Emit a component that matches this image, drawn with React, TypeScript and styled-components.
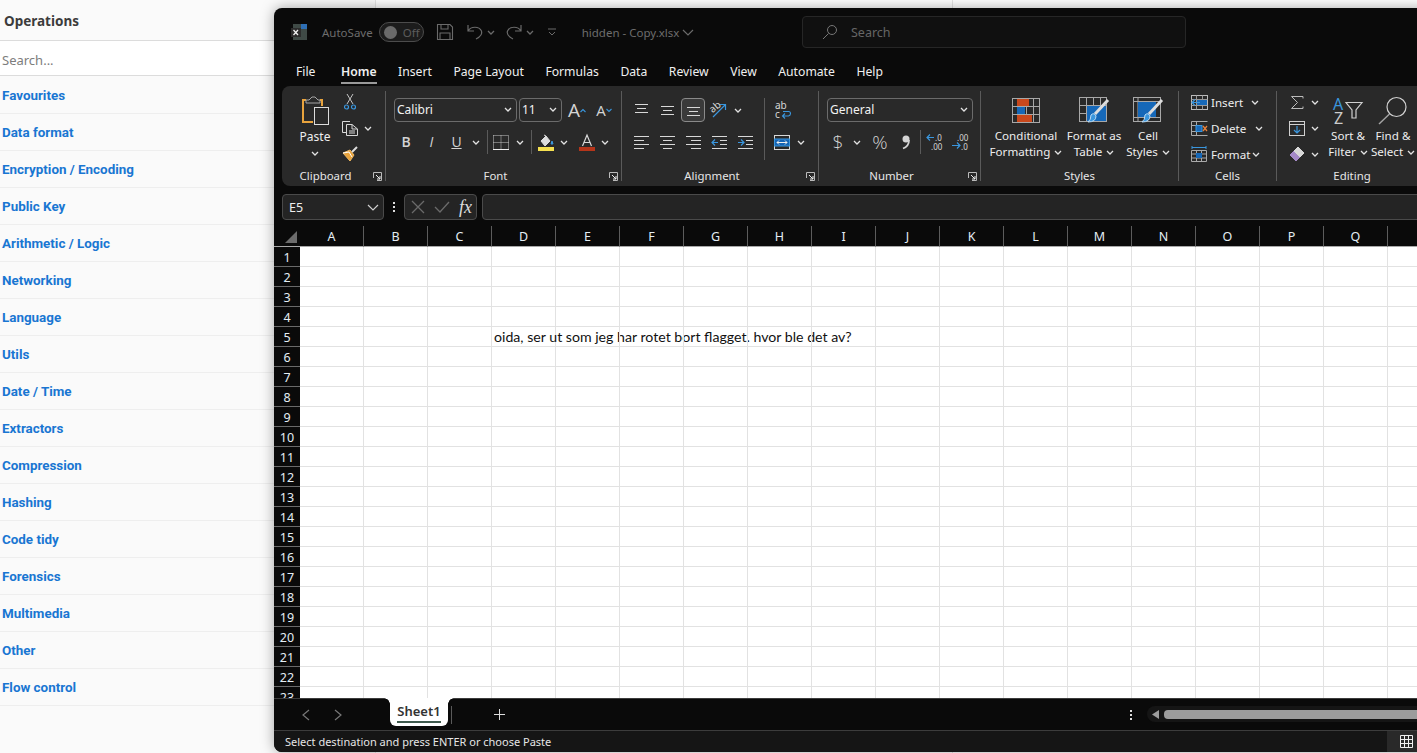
import React from "react";
import styled, { createGlobalStyle } from "styled-components";

const UI = `"Noto Sans", "Open Sans", sans-serif`;

const Global = createGlobalStyle`
  html, body { margin: 0; padding: 0; height: 100%; overflow: hidden; background: #fff; }
  #root { height: 753px; width: 1417px; overflow: hidden; position: relative; }
`;

const Page = styled.div`
  display: grid;
  grid-template-columns: 376px 577px 1fr;
  height: 753px;
  font-family: ${UI};
`;
const Sidebar = styled.aside`
  border-right: 1px solid #e4e4e4;
  background: #fafafa;
`;
const Pane = styled.div`
  border-right: 1px solid #e4e4e4;
  background: #fff;
`;
const SideHead = styled.div`
  height: 39px;
  padding-top: 1px;
  border-bottom: 1px solid #dcdcdc;
  display: flex;
  align-items: center;
  padding-left: 4px;
  font-size: 13.5px;
  font-weight: 700;
  color: #3c3c3c;
`;
const SideSearch = styled.div`
  height: 30px;
  padding-top: 4px;
  margin-bottom: 1px;
  background: #fff;
  border-bottom: 1px solid #dcdcdc;
  display: flex;
  align-items: center;
  padding-left: 2px;
  font-size: 13px;
  color: #7d7d7d;
`;
const SideRow = styled.div`
  height: 36px;
  border-bottom: 1px solid #eeeeee;
  display: flex;
  align-items: center;
  padding-left: 2px;
  font-family: Roboto, sans-serif;
  font-size: 13.4px;
  font-weight: 700;
  color: #1976d2;
`;

const Window = styled.section`
  position: absolute;
  left: 274px;
  top: 8px;
  width: 1160px;
  height: 744px;
  background: #0a0a0a;
  border-radius: 8px;
  box-shadow: 0 0 14px rgba(0, 0, 0, 0.35);
  display: flex;
  flex-direction: column;
  overflow: hidden;
  font-family: ${UI};
  color: #e6e6e6;
`;

const TitleBar = styled.div`
  height: 48px;
  flex: none;
  display: flex;
  align-items: center;
  padding-left: 17px;
  color: #6d6d6d;
  font-size: 11.5px;
`;
const TitleText = styled.span<{ $ml: number }>`
  margin-left: ${p => p.$ml}px;
  white-space: nowrap;
`;
const Toggle = styled.div`
  margin-left: 6px;
  width: 45px;
  height: 20px;
  box-sizing: border-box;
  border: 1px solid #4c4c4c;
  border-radius: 10px;
  background: #1c1c1c;
  display: flex;
  align-items: center;
  padding-left: 4px;
  gap: 6px;
  font-size: 11.5px;
  color: #5c5c5c;
`;
const Knob = styled.i`
  width: 13px;
  height: 13px;
  border-radius: 50%;
  background: #6a6a6a;
`;
const Slot = styled.span<{ $w: number; $ml?: number; $h?: number }>`
  flex: none;
  display: inline-flex;
  align-items: center;
  justify-content: center;
  width: ${p => p.$w}px;
  height: ${p => (p.$h ? `${p.$h}px` : "100%")};
  margin-left: ${p => p.$ml ?? 0}px;
`;
const TopSearch = styled.div`
  position: absolute;
  left: 528px;
  top: 8px;
  width: 384px;
  height: 32px;
  box-sizing: border-box;
  border: 1px solid #262626;
  border-radius: 4px;
  background: #101010;
  display: flex;
  align-items: center;
  padding-left: 19px;
  gap: 13px;
  font-size: 12.5px;
  color: #666;
`;

const MenuBar = styled.nav`
  height: 30px;
  flex: none;
  display: flex;
  align-items: center;
  gap: 21.5px;
  padding-left: 22px;
  font-size: 12.2px;
  color: #f0f0f0;
`;
const MenuItem = styled.span<{ $active?: boolean; $mr?: number }>`
  position: relative;
  white-space: nowrap;
  margin-right: ${p => p.$mr ?? 0}px;
  font-weight: ${p => (p.$active ? 600 : 400)};
  ${p =>
    p.$active &&
    `&::after { content: ""; position: absolute; left: 0; right: 0; bottom: -4px; height: 2px; background: #9a9a9a; }`}
`;

const Ribbon = styled.div`
  height: 100px;
  flex: none;
  margin-left: 8px;
  padding: 5px 0;
  box-sizing: border-box;
  background: #292929;
  border-radius: 8px 0 0 8px;
  display: flex;
`;
const Group = styled.div<{ $w: number; $last?: boolean }>`
  width: ${p => p.$w}px;
  flex: none;
  box-sizing: border-box;
  display: flex;
  flex-direction: column;
  border-right: ${p => (p.$last ? "none" : "1px solid #5a5a5a")};
`;
const GroupBody = styled.div<{ $pl?: number; $pt?: number }>`
  flex: 1;
  display: flex;
  padding-left: ${p => p.$pl ?? 0}px;
  padding-top: ${p => p.$pt ?? 0}px;
  min-height: 0;
`;
const GroupFoot = styled.div<{ $launcher?: boolean }>`
  height: 16px;
  flex: none;
  padding-top: 6px;
  box-sizing: border-box;
  display: grid;
  grid-template-columns: ${p => (p.$launcher ? "1fr 16px" : "1fr")};
  align-items: center;
  justify-items: center;
  font-size: 11.4px;
  line-height: 10px;
  color: #e6e6e6;
`;
const Rows = styled.div<{ $w?: number }>`
  display: flex;
  flex-direction: column;
  gap: 8px;
  width: ${p => (p.$w ? `${p.$w}px` : "auto")};
  flex: none;
`;
const SmallRows = styled.div<{ $ml?: number }>`
  display: flex;
  flex-direction: column;
  gap: 4px;
  margin-left: ${p => p.$ml ?? 0}px;
`;
const Line = styled.div<{ $h?: number }>`
  display: flex;
  align-items: center;
  height: ${p => p.$h ?? 24}px;
`;
const Select = styled.div<{ $w: number; $ml?: number }>`
  width: ${p => p.$w}px;
  height: 24px;
  margin-left: ${p => p.$ml ?? 0}px;
  box-sizing: border-box;
  flex: none;
  border: 1px solid #6b6b6b;
  border-radius: 4px;
  display: flex;
  align-items: center;
  justify-content: space-between;
  padding: 0 4px 1px 2px;
  font-size: 12px;
  color: #f2f2f2;
`;
const VSep = styled.i<{ $h: number; $ml: number }>`
  width: 1px;
  height: ${p => p.$h}px;
  margin-left: ${p => p.$ml}px;
  background: #5a5a5a;
  flex: none;
`;
const Glyph = styled.span<{ $size: number; $weight?: number; $italic?: boolean; $under?: boolean }>`
  font-family: "Open Sans", sans-serif;
  font-size: ${p => p.$size}px;
  font-weight: ${p => p.$weight ?? 400};
  font-style: ${p => (p.$italic ? "italic" : "normal")};
  text-decoration: ${p => (p.$under ? "underline" : "none")};
  color: #d4d4d4;
  line-height: 1;
`;
const Big = styled.div<{ $w: number; $ml?: number }>`
  width: ${p => p.$w}px;
  margin-left: ${p => p.$ml ?? 0}px;
  flex: none;
  display: flex;
  flex-direction: column;
  align-items: center;
  padding-top: 6px;
  font-size: 11.6px;
  line-height: 16px;
  color: #eee;
  white-space: nowrap;
`;
const BigIcon = styled.div`
  height: 26px;
  margin-bottom: 5px;
  display: flex;
  align-items: center;
`;
const ChevInline = styled.span`
  display: inline-block;
  vertical-align: middle;
  margin-left: 1px;
`;
const PasteBtn = styled.div`
  width: 50px;
  margin-left: 8px;
  flex: none;
  display: flex;
  flex-direction: column;
  align-items: center;
  padding-top: 4px;
  font-size: 12px;
  line-height: 16px;
  color: #eee;
`;
const PasteLabel = styled.span`
  margin-top: 4px;
  margin-bottom: 6px;
`;
const CellLabel = styled.span<{ $w: number }>`
  width: ${p => p.$w}px;
  flex: none;
  margin-left: 3px;
  font-size: 11.6px;
  color: #eee;
`;
const Pressed = styled.span`
  width: 24px;
  height: 24px;
  box-sizing: border-box;
  border: 1px solid #8a8a8a;
  border-radius: 4px;
  background: #3a3a3a;
  display: inline-flex;
  align-items: center;
  justify-content: center;
`;

const FormulaBar = styled.div`
  height: 26px;
  flex: none;
  margin-top: 8px;
  padding-left: 8px;
  display: flex;
  align-items: stretch;
`;
const NameBox = styled.div`
  width: 102px;
  box-sizing: border-box;
  border: 1px solid #4a4a4a;
  border-radius: 4px;
  background: #242424;
  display: flex;
  align-items: center;
  justify-content: space-between;
  padding: 0 4px 0 6px;
  font-size: 12.5px;
  color: #eee;
`;
const FxBox = styled.div`
  width: 73px;
  box-sizing: border-box;
  border: 1px solid #4a4a4a;
  border-radius: 4px;
  background: #242424;
  display: flex;
  align-items: center;
  justify-content: space-between;
  padding: 0 4px 0 6px;
`;
const FxText = styled.span`
  font-family: "Liberation Serif", serif;
  font-style: italic;
  font-size: 18px;
  color: #ddd;
`;
const FormulaInput = styled.div`
  flex: 1;
  margin-left: 5px;
  box-sizing: border-box;
  border: 1px solid #4a4a4a;
  border-radius: 4px;
  background: #242424;
`;
const Dots = styled.div<{ $w?: number }>`
  width: ${p => p.$w ?? 20}px;
  display: flex;
  flex-direction: column;
  align-items: center;
  justify-content: center;
  gap: 2px;
  & i { width: 2px; height: 2px; background: #ddd; }
`;

const Sheet = styled.div`
  margin-top: 6px;
  height: 472px;
  flex: none;
  overflow: hidden;
  display: grid;
  grid-template-columns: 26px repeat(18, 64px);
  grid-template-rows: 21px;
  grid-auto-rows: 20px;
  background: #fff;
`;
const Corner = styled.div`
  background: #0a0a0a;
  border-bottom: 1px solid #a8a8a8;
  display: flex;
  align-items: flex-end;
  justify-content: flex-end;
  padding: 0 3px 3px 0;
  box-sizing: border-box;
`;
const ColHead = styled.div`
  background: #0a0a0a;
  border-right: 1px solid #5c5c5c;
  border-bottom: 1px solid #a8a8a8;
  box-sizing: border-box;
  padding-top: 1px;
  display: flex;
  align-items: center;
  justify-content: center;
  font-size: 12.5px;
  color: #e4eef5;
`;
const RowHead = styled.div`
  background: #0a0a0a;
  border-bottom: 1px solid #6a6a6a;
  box-sizing: border-box;
  padding-top: 1px;
  display: flex;
  align-items: center;
  justify-content: center;
  font-size: 12.5px;
  color: #e4eef5;
`;
const Cell = styled.div`
  border-right: 1px solid #e2e2e2;
  border-bottom: 1px solid #e2e2e2;
  box-sizing: border-box;
  white-space: nowrap;
  padding-left: 2px;
  font-family: Lato, "Open Sans", sans-serif;
  font-size: 14.15px;
  line-height: 19px;
  color: #111;
`;

const TabBar = styled.div`
  height: 32px;
  flex: none;
  box-sizing: border-box;
  background: #0a0a0a;
  border-top: 1px solid #3c3c3c;
  display: flex;
  align-items: center;
`;
const Tab = styled.div`
  position: relative;
  align-self: flex-start;
  margin-top: -1px;
  margin-left: 47px;
  width: 58px;
  height: 28px;
  flex: none;
  box-sizing: border-box;
  background: #fff;
  border-radius: 0 0 6px 6px;
  display: flex;
  justify-content: center;
  padding-top: 4px;
  font-size: 13px;
  font-weight: 600;
  color: #333;
  &::before, &::after {
    content: "";
    position: absolute;
    top: 0;
    width: 6px;
    height: 6px;
  }
  &::before {
    left: -6px;
    background: radial-gradient(circle at 0 100%, transparent 5.5px, #fff 6px);
  }
  &::after {
    right: -6px;
    background: radial-gradient(circle at 100% 100%, transparent 5.5px, #fff 6px);
  }
`;
const TabText = styled.span`
  height: 19px;
  line-height: 18px;
  border-bottom: 2px solid #3f5a4e;
`;
const ScrollTrack = styled.div`
  margin-left: 14px;
  margin-top: -1px;
  flex: 1;
  height: 16px;
  background: #151515;
  border-radius: 8px 0 0 8px;
  display: flex;
  align-items: center;
  padding-left: 5px;
  gap: 5px;
`;
const ScrollThumb = styled.div`
  flex: 1;
  height: 9px;
  background: #9c9c9c;
  border-radius: 4px 0 0 4px;
`;
const StatusBar = styled.footer`
  height: 22px;
  flex: none;
  box-sizing: border-box;
  background: #151515;
  border-top: 1px solid #3c3c3c;
  display: flex;
  align-items: center;
  justify-content: space-between;
  padding-left: 11px;
  font-size: 11px;
  color: #e6e6e6;
`;
const ViewBtn = styled.div`
  width: 47px;
  height: 100%;
  box-sizing: border-box;
  background: #292929;
  padding-left: 13px;
  display: flex;
  align-items: center;
`;

const S = "#d8d8d8";
const B = "#3a96dd";
const O = "#c8481c";

const Icon: React.FC<{ w: number; h: number; vb?: string; children: React.ReactNode; c?: string }> = ({ w, h, vb, children, c }) => (
  <svg width={w} height={h} viewBox={vb ?? `0 0 ${w} ${h}`} fill="none" stroke={c ?? S} strokeWidth={1} style={{ display: "block", flex: "none", overflow: "visible" }}>
    {children}
  </svg>
);

const Chev = ({ c }: { c?: string }) => (
  <Icon w={8} h={5} c={c ?? "#e2e2e2"}>
    <path d="M1 1l3 3 3-3" strokeWidth={1.3} />
  </Icon>
);

const Chev2 = () => (
  <ChevInline>
    <Chev />
  </ChevInline>
);

const ChevLg = ({ c }: { c?: string }) => (
  <Icon w={12} h={7} c={c ?? "#cfcfcf"}>
    <path d="M1 1l5 5 5-5" strokeWidth={1.2} />
  </Icon>
);

const Launcher = () => (
  <Icon w={9} h={9}>
    <path d="M.5 6V.5H8.5V8.5H4" stroke="#bbb" />
    <path d="M3 3l4 4M7 4v3H4" stroke="#eee" />
  </Icon>
);

const ExcelLogo = () => (
  <Icon w={16} h={16}>
    <rect x={2} y={0} width={14} height={16} fill="#3f4a46" stroke="none" />
    <rect x={10} y={0} width={6} height={5} fill="#2e6fb5" stroke="none" />
    <rect x={0} y={4} width={10} height={9} fill="#2c2c2c" stroke="none" />
    <path d="M2.500 6l4.500 5M7 6l-4.500 5" stroke="#f0f0f0" strokeWidth={1.3} />
  </Icon>
);

const SaveIcon = () => (
  <Icon w={16} h={16} c="#6a6a6a">
    <path d="M.5.5H13L15.5 3V15.5H.5Z M4 .5V5H11V.5 M3 15.5V9H13V15.5" strokeWidth={1.1} />
  </Icon>
);
const UndoIcon = ({ flip }: { flip?: boolean }) => (
  <Icon w={16} h={16} c="#6a6a6a">
    <g transform={flip ? "matrix(-1 0 0 1 16 0)" : undefined}>
      <path d="M1 1V7H7M1 7C4 2 12 2 14.500 7C15.500 10 13 13 9 15" strokeWidth={1.2} />
    </g>
  </Icon>
);
const CustomizeIcon = () => (
  <Icon w={8} h={9} c="#6a6a6a">
    <path d="M0 1H8M1 4l3 3 3-3" />
  </Icon>
);
const SearchGlass = () => (
  <Icon w={16} h={16} c="#777">
    <circle cx={10} cy={6} r={4.500} />
    <path d="M6.500 9.500L1 15" />
  </Icon>
);
const PasteIcon = () => (
  <Icon w={28} h={30}>
    <path d="M5 5H2V27H12M19 5H21V11" stroke="#e8a33d" strokeWidth={2} />
    <path d="M5 8V5H8L11 2H14L17 5H19V8Z" stroke="#a5a5a5" />
    <rect x={13.500} y={12.500} width={14} height={17} stroke="#dcdcdc" />
  </Icon>
);
const ScissorsIcon = () => (
  <Icon w={12} h={16}>
    <path d="M3 10L9 0M9 10L3 0" stroke="#c4c4c4" />
    <circle cx={2.500} cy={13} r={2} stroke={B} strokeWidth={1.2} />
    <circle cx={9.500} cy={13} r={2} stroke={B} strokeWidth={1.2} />
  </Icon>
);
const CopyIcon = () => (
  <Icon w={16} h={16}>
    <path d="M8 1.500H.5V12.500H4" />
    <path d="M4.500 4.500H10L15.500 9V15.500H4.500Z M10 4.500V9H15.500 M7 11H13M7 13H13" />
  </Icon>
);
const BrushIcon = () => (
  <Icon w={17} h={16}>
    <path d="M1 7L8 4L12 9L8 15Z" fill="#e8a33d" stroke="#f0b860" />
    <path d="M1 7L7 6L10 11" stroke="#fff" />
    <path d="M10 6L15 1" stroke="#ddd" strokeWidth={2} />
  </Icon>
);
const SizeUp = ({ down }: { down?: boolean }) => (
  <>
    <Glyph $size={down ? 15 : 19}>A</Glyph>
    <Icon w={6} h={5} c={B}>
      <path d={down ? "M.5 1l2.500 2.500L5.500 1" : "M.5 4L3 1.500 5.500 4"} strokeWidth={1.1} />
    </Icon>
  </>
);
const BordersIcon = () => (
  <Icon w={16} h={15}>
    <path d="M.5.5H15.500V14.500M.5.5V14.500M8 .5V14.500M.5 7.500H15.500" strokeDasharray="1 1" stroke="#c8c8c8" />
    <path d="M0 14.500H16" stroke="#eee" />
  </Icon>
);
const FillIcon = () => (
  <Icon w={16} h={17}>
    <path d="M3 7L8 2L12 7L7 12Z" stroke="#ddd" fill="#ddd" />
    <path d="M6 1l2 1" stroke="#ddd" />
    <path d="M14 7l1 3h-2z" fill={B} stroke={B} />
    <rect x={0} y={13} width={16} height={4} fill="#f5e050" stroke="none" />
  </Icon>
);
const FontColorIcon = () => (
  <Icon w={16} h={17}>
    <path d="M3.500 12L8 1l4.500 11M5 8.500H11" strokeWidth={1.2} />
    <rect x={0} y={13} width={16} height={4} fill="#b5351a" stroke="none" />
  </Icon>
);
const Bars = ({ y, x }: { y: number[]; x: [number, number][] }) => (
  <Icon w={15} h={14}>
    {y.map((v, i) => (
      <path key={i} d={`M${x[i][0]} ${v}H${x[i][1]}`} strokeWidth={1} />
    ))}
  </Icon>
);
const OrientIcon = () => (
  <Icon w={18} h={16}>
    <text x={1} y={9} fontSize={10} fill={S} stroke="none" fontFamily={UI} transform="rotate(-40 5 8)">ab</text>
    <path d="M3 15L15 3M10 2.500H15.500V8" stroke={B} strokeWidth={1.2} />
  </Icon>
);
const IndentIcon = ({ rev }: { rev?: boolean }) => (
  <Icon w={15} h={14}>
    <path d="M0 1.500H15M8 5.500H15M8 9.500H15M0 13.500H15" />
    <path d={rev ? "M0 7.500H6M3 4.500L0 7.500L3 10.500" : "M0 7.500H6M3 4.500L6 7.500L3 10.500"} stroke={B} strokeWidth={1.2} />
  </Icon>
);
const WrapIcon = () => (
  <Icon w={16} h={16}>
    <text x={0} y={7} fontSize={10} fill={S} stroke="none" fontFamily={UI}>ab</text>
    <text x={0} y={15.500} fontSize={10} fill={S} stroke="none" fontFamily={UI}>c</text>
    <path d="M8 9.500H13.500Q15.500 9.500 15.500 11.500T13.500 14H8M10 11.500L7.500 14L10 16.500" stroke={B} strokeWidth={1.1} />
  </Icon>
);
const MergeIcon = () => (
  <Icon w={16} h={15}>
    <rect x={0.500} y={0.500} width={15} height={14} />
    <rect x={0.500} y={4} width={15} height={7} fill="#1464b4" stroke={B} />
    <path d="M3 7.500H13M5 5.500L3 7.500L5 9.500M11 5.500L13 7.500L11 9.500" stroke="#eee" />
  </Icon>
);
const DecIcon = ({ more }: { more?: boolean }) => (
  <Icon w={17} h={16}>
    <text x={more ? 5 : 9} y={6.500} fontSize={8} fill={S} stroke="none" fontFamily={UI}>{more ? ".00" : ".0"}</text>
    <text x={more ? 9 : 5} y={15.500} fontSize={8} fill={S} stroke="none" fontFamily={UI}>{more ? ".0" : ".00"}</text>
    <path d={more ? "M0 11.500H8M5 8.500L8 11.500L5 14.500" : "M8 3.500H1M4 .5L1 3.500L4 6.500"} stroke={B} strokeWidth={1.2} />
  </Icon>
);
const CommaIcon = () => (
  <Icon w={10} h={14} c="#d4d4d4">
    <circle cx={5} cy={4} r={3.500} fill="#d4d4d4" stroke="none" />
    <path d="M8 5C8 9 6 12 2 13.500" strokeWidth={1.8} />
  </Icon>
);
const TableBase = () => (
  <>
    <rect x={0.500} y={0.500} width={27} height={24} stroke="#a8a8a8" />
    <path d="M7.500 .5V24.500M14.500 .5V24.500M21.500 .5V24.500M.5 8.500H27.500M.5 16.500H27.500" stroke="#a8a8a8" />
  </>
);
const CondIcon = () => (
  <Icon w={28} h={25}>
    <TableBase />
    <rect x={5} y={1} width={12} height={7} fill={O} stroke="none" />
    <rect x={5} y={9} width={8} height={7} fill="#1668b8" stroke="none" />
    <rect x={5} y={17} width={15} height={7} fill={O} stroke="none" />
  </Icon>
);
const PaintBrush = ({ x = 0 }: { x?: number }) => (
  <g transform={`translate(${x} 0)`}>
    <path d="M15 17L28 3" stroke="#ddd" strokeWidth={3} />
    <path d="M8 25Q16 25 16 19Q14 15 11 18Q11 23 8 25Z" fill={B} stroke="#bcdcf5" />
  </g>
);
const FormatTableIcon = () => (
  <Icon w={30} h={26}>
    <TableBase />
    <rect x={8} y={9} width={19} height={15} fill="#1668b8" stroke="none" />
    <PaintBrush x={1} />
  </Icon>
);
const CellStyleIcon = () => (
  <Icon w={30} h={26}>
    <rect x={0.500} y={0.500} width={27} height={24} stroke="#a8a8a8" />
    <path d="M.5 4.500H27M5 .5V24.500M.5 20.500H27" stroke="#a8a8a8" />
    <rect x={5} y={5} width={18} height={15} fill="#1668b8" stroke="none" />
    <PaintBrush x={1} />
  </Icon>
);
const InsertCells = () => (
  <Icon w={17} h={15}>
    <rect x={0.500} y={0.500} width={16} height={14} stroke="#bbb" />
    <path d="M5.500 .5V14.500M11.500 .5V14.500M.5 4.500H16.500M.5 10.500H16.500" stroke="#999" />
    <rect x={6} y={5} width={10} height={5} fill="#1668b8" stroke="none" />
    <path d="M1 7.500H9M4 4.500L1 7.500L4 10.500" stroke={B} strokeWidth={1.2} />
  </Icon>
);
const DeleteCells = () => (
  <Icon w={17} h={15}>
    <path d="M.5.5H11M.5 14.500H11M.5.5V14.500M5.500 .5V4M5.500 11V14.500M.5 4.500H5M.5 10.500H5M16.500 .5H11M16.500 14.500H11" stroke="#aaa" />
    <rect x={5} y={4.500} width={6} height={6} fill="#1668b8" stroke={B} />
    <path d="M12 5L16 10M16 5L12 10" stroke="#e8803a" strokeWidth={1.3} />
  </Icon>
);
const FormatCells = () => (
  <Icon w={16} h={16}>
    <path d="M.5 4.500H15.500V15.500H.5ZM5.500 4.500V15.500M10.500 4.500V15.500M.5 8H15.500M.5 12H15.500" stroke="#aaa" />
    <rect x={5} y={7} width={6} height={5} fill="#1668b8" stroke="none" />
    <path d="M1 1.500H15M1 0V3M15 0V3" stroke={B} />
  </Icon>
);
const SumIcon = () => (
  <Icon w={13} h={13}>
    <path d="M12 2.500V.5H.5L6.500 6.500L.5 12.500H12V10.500" stroke="#bbb" />
  </Icon>
);
const FillDown = () => (
  <Icon w={16} h={15}>
    <rect x={0.500} y={0.500} width={15} height={14} stroke="#d0d0d0" />
    <path d="M.5 3.500H15.500" stroke="#d0d0d0" />
    <path d="M8 5V12M5 9L8 12L11 9" stroke={B} strokeWidth={1.2} />
  </Icon>
);
const Eraser = () => (
  <Icon w={16} h={16}>
    <path d="M1 9L9 1L15 7L7 15Z" fill="#a58ac8" stroke="#a58ac8" />
    <path d="M5 5L11 11L15 7L9 1Z" fill="#d8d8d8" stroke="#d8d8d8" />
  </Icon>
);
const SortIcon = () => (
  <Icon w={30} h={26}>
    <text x={0} y={13} fontSize={16} fill={B} stroke="none" fontFamily={UI}>A</text>
    <text x={1} y={27} fontSize={16} fill="#ccc" stroke="none" fontFamily={UI}>Z</text>
    <path d="M13 5.500H29L23 13V21H19V13Z" stroke="#d0d0d0" strokeWidth={1.2} />
  </Icon>
);
const FindIcon = () => (
  <Icon w={30} h={28}>
    <circle cx={18.500} cy={11} r={9.500} stroke="#d0d0d0" strokeWidth={1.2} />
    <path d="M11.500 18L1 28" stroke="#a5a5a5" strokeWidth={1.4} />
  </Icon>
);

const OPS = ["Favourites", "Data format", "Encryption / Encoding", "Public Key", "Arithmetic / Logic", "Networking", "Language", "Utils", "Date / Time", "Extractors", "Compression", "Hashing", "Code tidy", "Forensics", "Multimedia", "Other", "Flow control"];
const TABS = ["File", "Home", "Insert", "Page Layout", "Formulas", "Data", "Review", "View", "Automate", "Help"];
const COLS = "ABCDEFGHIJKLMNOPQ".split("").concat("");
const ROWS = Array.from({ length: 23 }, (_, i) => i + 1);

const BarsTop = () => <Bars y={[1.5, 5.5, 9.5]} x={[[1, 14], [3, 12], [1, 14]]} />;
const BarsMid = () => <Bars y={[3.5, 7.5, 11.5]} x={[[1, 14], [3, 12], [1, 14]]} />;
const BarsBot = () => <Bars y={[4.5, 8.5, 12.5]} x={[[1, 14], [3, 12], [1, 14]]} />;
const AlignL = () => <Bars y={[1.5, 5.5, 9.5, 13.5]} x={[[0, 15], [0, 10], [0, 15], [0, 10]]} />;
const AlignC = () => <Bars y={[1.5, 5.5, 9.5, 13.5]} x={[[0, 15], [3, 12], [0, 15], [3, 12]]} />;
const AlignR = () => <Bars y={[1.5, 5.5, 9.5, 13.5]} x={[[0, 15], [5, 15], [0, 15], [5, 15]]} />;

export default function App() {
  return (
    <>
      <Global />
      <Page>
        <Sidebar>
          <SideHead>Operations</SideHead>
          <SideSearch>Search...</SideSearch>
          {OPS.map(op => (
            <SideRow key={op}>{op}</SideRow>
          ))}
        </Sidebar>
        <Pane />
        <div />
      </Page>

      <Window>
        <TitleBar>
          <ExcelLogo />
          <TitleText $ml={15}>AutoSave</TitleText>
          <Toggle><Knob />Off</Toggle>
          <Slot $w={16} $ml={13}><SaveIcon /></Slot>
          <Slot $w={16} $ml={14}><UndoIcon /></Slot>
          <Slot $w={8} $ml={4}><Chev c="#6a6a6a" /></Slot>
          <Slot $w={16} $ml={11}><UndoIcon flip /></Slot>
          <Slot $w={8} $ml={4}><Chev c="#6a6a6a" /></Slot>
          <Slot $w={8} $ml={14}><CustomizeIcon /></Slot>
          <TitleText $ml={26}>hidden - Copy.xlsx</TitleText>
          <Slot $w={12} $ml={3}><ChevLg c="#6a6a6a" /></Slot>
          <TopSearch><SearchGlass />Search</TopSearch>
        </TitleBar>

        <MenuBar>
          {TABS.map(t => (
            <MenuItem key={t} $active={t === "Home"} $mr={t === "File" ? 4 : 0}>{t}</MenuItem>
          ))}
        </MenuBar>

        <Ribbon>
          <Group $w={104}>
            <GroupBody>
              <PasteBtn>
                <PasteIcon />
                <PasteLabel>Paste</PasteLabel>
                <Chev />
              </PasteBtn>
              <SmallRows>
                <Line $h={22}><Slot $w={20}><ScissorsIcon /></Slot></Line>
                <Line $h={22}><Slot $w={20}><CopyIcon /></Slot><Slot $w={16}><Chev /></Slot></Line>
                <Line $h={22}><Slot $w={20}><BrushIcon /></Slot></Line>
              </SmallRows>
            </GroupBody>
            <GroupFoot $launcher>Clipboard<Launcher /></GroupFoot>
          </Group>

          <Group $w={236}>
            <GroupBody $pl={8} $pt={7}>
              <Rows>
                <Line>
                  <Select $w={123}>Calibri<Chev /></Select>
                  <Select $w={43} $ml={2}>11<Chev /></Select>
                  <Slot $w={24} $ml={3}><SizeUp /></Slot>
                  <Slot $w={24} $ml={3}><SizeUp down /></Slot>
                </Line>
                <Line>
                  <Slot $w={24}><Glyph $size={14} $weight={600}>B</Glyph></Slot>
                  <Slot $w={27}><Glyph $size={14} $italic>I</Glyph></Slot>
                  <Slot $w={23}><Glyph $size={14} $under>U</Glyph></Slot>
                  <Slot $w={16}><Chev /></Slot>
                  <VSep $h={24} $ml={3} />
                  <Slot $w={22} $ml={2}><BordersIcon /></Slot>
                  <Slot $w={16}><Chev /></Slot>
                  <VSep $h={24} $ml={3} />
                  <Slot $w={23} $ml={2}><FillIcon /></Slot>
                  <Slot $w={14}><Chev /></Slot>
                  <Slot $w={24} $ml={4}><FontColorIcon /></Slot>
                  <Slot $w={12}><Chev /></Slot>
                </Line>
              </Rows>
            </GroupBody>
            <GroupFoot $launcher>Font<Launcher /></GroupFoot>
          </Group>

          <Group $w={197}>
            <GroupBody $pl={6} $pt={7}>
              <Rows $w={136}>
                <Line>
                  <Slot $w={26}><BarsTop /></Slot>
                  <Slot $w={26}><BarsMid /></Slot>
                  <Slot $w={26}><Pressed><BarsBot /></Pressed></Slot>
                  <Slot $w={26}><OrientIcon /></Slot>
                  <Slot $w={12}><Chev /></Slot>
                </Line>
                <Line>
                  <Slot $w={26}><AlignL /></Slot>
                  <Slot $w={26}><AlignC /></Slot>
                  <Slot $w={26}><AlignR /></Slot>
                  <Slot $w={26}><IndentIcon rev /></Slot>
                  <Slot $w={26}><IndentIcon /></Slot>
                </Line>
              </Rows>
              <VSep $h={62} $ml={0} />
              <Rows>
                <Line><Slot $w={22} $ml={7}><WrapIcon /></Slot></Line>
                <Line>
                  <Slot $w={22} $ml={6}><MergeIcon /></Slot>
                  <Slot $w={16}><Chev /></Slot>
                </Line>
              </Rows>
            </GroupBody>
            <GroupFoot $launcher>Alignment<Launcher /></GroupFoot>
          </Group>

          <Group $w={162}>
            <GroupBody $pl={8} $pt={7}>
              <Rows>
                <Line><Select $w={146}>General<Chev /></Select></Line>
                <Line>
                  <Slot $w={22}><Glyph $size={19} $weight={300}>$</Glyph></Slot>
                  <Slot $w={16}><Chev /></Slot>
                  <Slot $w={24} $ml={3}><Glyph $size={19} $weight={300}>%</Glyph></Slot>
                  <Slot $w={24} $ml={2}><CommaIcon /></Slot>
                  <VSep $h={24} $ml={2} />
                  <Slot $w={22} $ml={2}><DecIcon /></Slot>
                  <Slot $w={22} $ml={4}><DecIcon more /></Slot>
                </Line>
              </Rows>
            </GroupBody>
            <GroupFoot $launcher>Number<Launcher /></GroupFoot>
          </Group>

          <Group $w={198}>
            <GroupBody $pl={9}>
              <Big $w={72}><BigIcon><CondIcon /></BigIcon>Conditional<span>Formatting <Chev2 /></span></Big>
              <Big $w={64}><BigIcon><FormatTableIcon /></BigIcon>Format as<span>Table <Chev2 /></span></Big>
              <Big $w={44}><BigIcon><CellStyleIcon /></BigIcon>Cell<span>Styles <Chev2 /></span></Big>
            </GroupBody>
            <GroupFoot>Styles</GroupFoot>
          </Group>

          <Group $w={98}>
            <GroupBody $pl={11}>
              <SmallRows>
                <Line $h={22}><Slot $w={18}><InsertCells /></Slot><CellLabel $w={38}>Insert</CellLabel><Slot $w={12}><Chev /></Slot></Line>
                <Line $h={22}><Slot $w={18}><DeleteCells /></Slot><CellLabel $w={42}>Delete</CellLabel><Slot $w={12}><Chev /></Slot></Line>
                <Line $h={22}><Slot $w={18}><FormatCells /></Slot><CellLabel $w={39}>Format</CellLabel><Slot $w={12}><Chev /></Slot></Line>
              </SmallRows>
            </GroupBody>
            <GroupFoot>Cells</GroupFoot>
          </Group>

          <Group $w={150} $last>
            <GroupBody $pl={10}>
              <SmallRows>
                <Line $h={22}><Slot $w={20}><SumIcon /></Slot><Slot $w={16}><Chev /></Slot></Line>
                <Line $h={22}><Slot $w={20}><FillDown /></Slot><Slot $w={16}><Chev /></Slot></Line>
                <Line $h={22}><Slot $w={20}><Eraser /></Slot><Slot $w={16}><Chev /></Slot></Line>
              </SmallRows>
              <Big $w={44} $ml={3}><BigIcon><SortIcon /></BigIcon>Sort &amp;<span>Filter <Chev2 /></span></Big>
              <Big $w={44} $ml={1}><BigIcon><FindIcon /></BigIcon>Find &amp;<span>Select <Chev2 /></span></Big>
            </GroupBody>
            <GroupFoot>Editing</GroupFoot>
          </Group>
        </Ribbon>

        <FormulaBar>
          <NameBox>E5<ChevLg /></NameBox>
          <Dots><i /><i /><i /></Dots>
          <FxBox>
            <Icon w={14} h={14} c="#6a6a6a"><path d="M1 1L13 13M13 1L1 13" strokeWidth={1.3} /></Icon>
            <Icon w={16} h={12} c="#6a6a6a"><path d="M1 6L6 11L15 1" strokeWidth={1.3} /></Icon>
            <FxText>fx</FxText>
          </FxBox>
          <FormulaInput />
        </FormulaBar>

        <Sheet>
          <Corner>
            <Icon w={12} h={12}><path d="M12 0V12H0Z" fill="#6c6c6c" stroke="none" /></Icon>
          </Corner>
          {COLS.map((c, i) => (
            <ColHead key={i}>{c}</ColHead>
          ))}
          {ROWS.map(r => (
            <React.Fragment key={r}>
              <RowHead>{r}</RowHead>
              {COLS.map((c, i) => (
                <Cell key={i}>{r === 5 && c === "D" ? "oida, ser ut som jeg har rotet bort flagget. hvor ble det av?" : null}</Cell>
              ))}
            </React.Fragment>
          ))}
        </Sheet>

        <TabBar>
          <Slot $w={10} $ml={27}><Icon w={8} h={12} c="#777"><path d="M7 1L1 6L7 11" strokeWidth={1.2} /></Icon></Slot>
          <Slot $w={10} $ml={22}><Icon w={8} h={12} c="#777"><path d="M1 1L7 6L1 11" strokeWidth={1.2} /></Icon></Slot>
          <Tab><TabText>Sheet1</TabText></Tab>
          <VSep $h={18} $ml={3} />
          <Slot $w={12} $ml={41}><Icon w={11} h={11} c="#ddd"><path d="M5.500 0V11M0 5.500H11" /></Icon></Slot>
          <Slot $w={4} $ml={624}><Dots $w={4}><i /><i /><i /></Dots></Slot>
          <ScrollTrack>
            <Icon w={7} h={9}><path d="M7 0V9L0 4.500Z" fill="#9c9c9c" stroke="none" /></Icon>
            <ScrollThumb />
          </ScrollTrack>
        </TabBar>

        <StatusBar>
          Select destination and press ENTER or choose Paste
          <ViewBtn>
            <Icon w={13} h={13} c="#f0f0f0"><path d="M.5.5H12.500V12.500H.5ZM4.500 .5V12.500M8.500 .5V12.500M.5 4.500H12.500M.5 8.500H12.500" /></Icon>
          </ViewBtn>
        </StatusBar>
      </Window>
    </>
  );
}
